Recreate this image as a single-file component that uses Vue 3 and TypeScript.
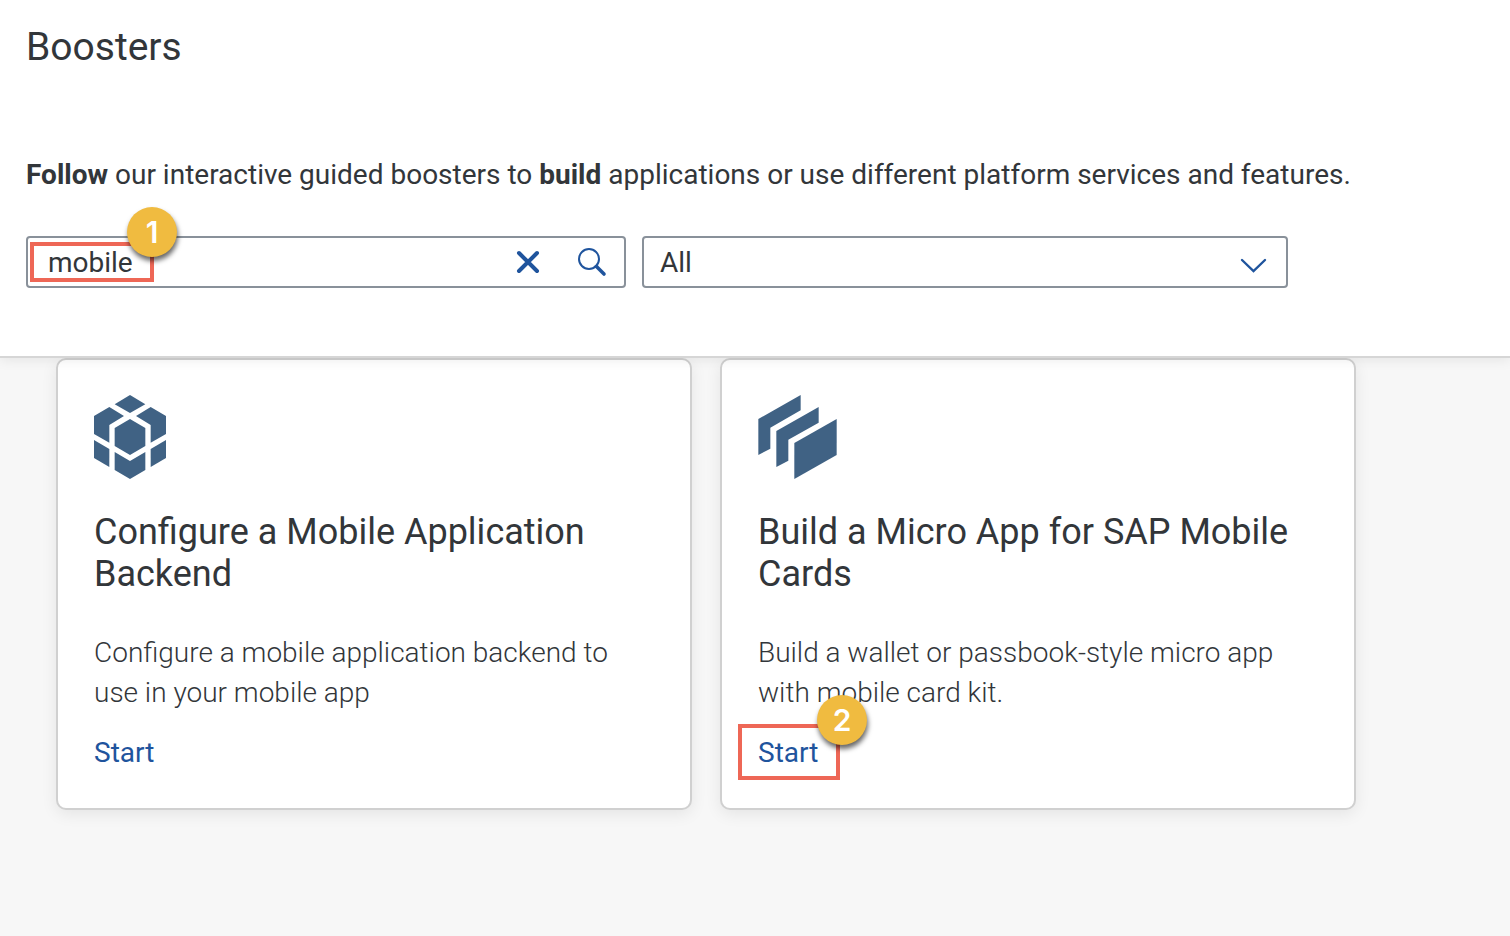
<script setup lang="ts">
import { ref } from 'vue'

interface Booster {
  id: string
  title: string
  text: string
  iconBox: string
  iconClass: string
  shapes: string[]
  step?: number
}

const query = ref('mobile')
const category = ref('All')
const categories: string[] = ['All', 'Mobile', 'Integration', 'Extension']

const boosters: Booster[] = [
  {
    id: 'backend',
    title: 'Configure a Mobile Application Backend',
    text: 'Configure a mobile application backend to use in your mobile app',
    iconBox: '0 0 216 252',
    iconClass: 'icon-cube',
    shapes: [
      '108,0 154,28 108,54 62,28',
      '0,63 46,36 90,63 46,90 46,143 0,117',
      '216,63 170,36 126,63 170,90 170,143 216,117',
      '108,72 154,99 154,153 108,180 62,153 62,99',
      '0,135 46,162 46,216 0,189',
      '216,135 170,162 170,216 216,189',
      '62,171 108,198 154,171 154,225 108,252 62,225'
    ]
  },
  {
    id: 'cards',
    title: 'Build a Micro App for SAP Mobile Cards',
    text: 'Build a wallet or passbook-style micro app with mobile card kit.',
    iconBox: '0 0 237 252',
    iconClass: 'icon-cards',
    shapes: [
      '1,72 128,0 128,46 37,98 37,161 1,180',
      '55,108 182,36 182,83 91,134 91,197 55,216',
      '109,144 236,72 236,180 109,252'
    ],
    step: 2
  }
]
</script>

<template>
  <div class="page">
    <header class="header">
      <h1>Boosters</h1>
      <p class="intro">
        <strong>Follow</strong> our interactive guided boosters to <strong>build</strong> applications or use different platform services and features.
      </p>
      <form class="filters" @submit.prevent>
        <div class="field search">
          <input v-model="query" type="text" aria-label="Search boosters" />
          <button type="button" aria-label="Clear search" @click="query = ''">
            <svg class="icon" viewBox="0 0 32 32" fill="none">
              <path d="M7 7 25 25M25 7 7 25" stroke="currentColor" stroke-width="4" stroke-linecap="round" />
            </svg>
          </button>
          <button type="submit" aria-label="Search">
            <svg class="icon" viewBox="0 0 32 32" fill="none">
              <circle cx="13" cy="13" r="10" stroke="currentColor" stroke-width="2" />
              <path d="M20.5 20.5 28 28" stroke="currentColor" stroke-width="3.6" stroke-linecap="round" />
            </svg>
          </button>
          <span class="marker marker-search"><span class="badge">1</span></span>
        </div>
        <div class="field">
          <select v-model="category" aria-label="Category">
            <option v-for="c in categories" :key="c">{{ c }}</option>
          </select>
          <svg class="icon chevron" viewBox="0 0 32 32" fill="none">
            <path d="M4 14 15.5 25 27 14" stroke="currentColor" stroke-width="2.4" stroke-linecap="round" />
          </svg>
        </div>
      </form>
    </header>

    <main class="boosters">
      <article v-for="b in boosters" :key="b.id" class="card">
        <svg :class="b.iconClass" :viewBox="b.iconBox" aria-hidden="true">
          <polygon v-for="s in b.shapes" :key="s" :points="s" fill="#406284" />
        </svg>
        <h2>{{ b.title }}</h2>
        <p>{{ b.text }}</p>
        <div class="action">
          <a href="#">Start</a>
          <span v-if="b.step" class="marker marker-start"><span class="badge">{{ b.step }}</span></span>
        </div>
      </article>
    </main>
  </div>
</template>

<style>
body {
  margin: 0;
  background: #f7f7f7;
}
</style>

<style scoped>
.page {
  min-height: 100vh;
  color: #32363a;
  font-family: Roboto, "Noto Sans", sans-serif;
  font-size: 28px;
}
.page * {
  box-sizing: border-box;
}
.header {
  position: relative;
  padding: 22px 26px 68px;
  background: #fff;
  border-bottom: 2px solid #d6d6d6;
  box-shadow: 0 2px 12px rgba(0, 0, 0, 0.08);
}
h1 {
  margin: 0 0 81px;
  font-size: 39px;
  font-weight: 400;
  line-height: 50px;
}
.intro {
  margin: 0 0 39px;
  line-height: 44px;
}
.filters {
  display: grid;
  grid-template-columns: 600fr 646fr;
  gap: 16px;
  max-width: 1262px;
}
.field {
  position: relative;
  display: flex;
  align-items: center;
  height: 52px;
  border: 2px solid #89919a;
  border-radius: 4px;
  background: #fff;
}
.field input,
.field select {
  flex: 1;
  min-width: 0;
  height: 100%;
  padding: 0 16px;
  border: 0;
  outline: 0;
  appearance: none;
  background: transparent;
  color: inherit;
  font: inherit;
}
.field input {
  padding: 0 20px;
}
.field button {
  display: flex;
  align-items: center;
  justify-content: center;
  width: 64px;
  height: 100%;
  padding: 0;
  border: 0;
  background: transparent;
  color: #1f549d;
  cursor: pointer;
}
.icon {
  width: 32px;
  height: 32px;
}
.chevron {
  position: absolute;
  right: 16px;
  color: #1f549d;
  pointer-events: none;
}
.marker {
  position: absolute;
  border: 4px solid #ee6756;
  pointer-events: none;
}
.marker-search {
  top: 4px;
  left: 2px;
  width: 124px;
  height: 40px;
}
.marker-start {
  top: -9px;
  left: -20px;
  width: 102px;
  height: 56px;
}
.badge {
  position: absolute;
  top: -39px;
  right: -27px;
  width: 50px;
  height: 50px;
  border-radius: 50%;
  background: #f0bb40;
  box-shadow: 1px 4px 5px rgba(0, 0, 0, 0.6);
  color: #fff;
  font-family: Inter, "Liberation Sans", sans-serif;
  font-size: 30px;
  font-weight: 600;
  line-height: 50px;
  text-align: center;
}
.marker-start .badge {
  top: -33px;
  right: -31px;
}
.boosters {
  display: grid;
  grid-template-columns: 1fr 1fr;
  gap: 28px;
  max-width: 1412px;
  padding: 0 56px 56px;
}
.card {
  padding: 35px 36px;
  border: 2px solid #d0d0d0;
  border-radius: 10px;
  background: #fff;
  box-shadow: 0 4px 16px rgba(0, 0, 0, 0.08);
}
.icon-cube,
.icon-cards {
  display: block;
  width: 72px;
  height: 84px;
}
.icon-cards {
  width: 79px;
}
h2 {
  margin: 32px 0 38px;
  font-size: 36px;
  font-weight: 400;
  line-height: 42px;
}
.card p {
  margin: 0;
  font-weight: 300;
  line-height: 40px;
}
.action {
  position: relative;
  margin-top: 20px;
  line-height: 40px;
}
.action a {
  color: #1f549d;
  text-decoration: none;
}
</style>
